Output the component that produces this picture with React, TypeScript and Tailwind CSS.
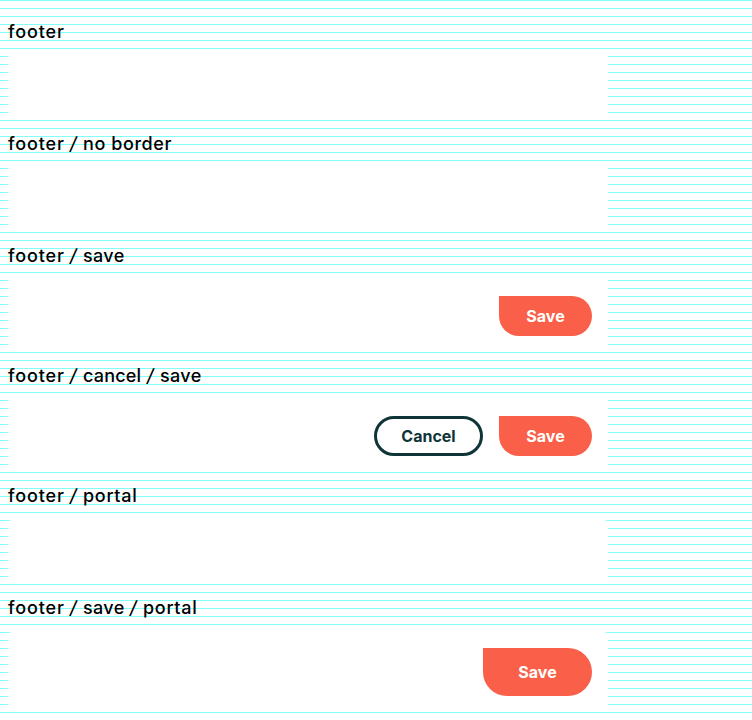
import type { ReactNode } from "react";

const wordStyles: Record<string, string> = {
  footer: "w-14 tracking-[0.86px]",
  "no border": "w-[89px] tracking-[0.58px]",
  save: "w-[41px] tracking-[0.36px]",
  cancel: "w-[58px] tracking-[0.2px]",
  portal: "w-[54px] tracking-[0.7px]",
};

function Title({ words }: { words: string[] }) {
  return (
    <h2 className="flex h-12 items-center gap-[5px] whitespace-nowrap text-[18px] font-medium leading-6 text-black">
      {words.map((word, i) => (
        <span key={word} className="flex gap-[5px]">
          {i > 0 && (
            <span className="w-[9px] -skew-x-[10deg] text-center">/</span>
          )}
          <span className={wordStyles[word]}>{word}</span>
        </span>
      ))}
    </h2>
  );
}

function Footer({ height, rounded, children }: { height: string; rounded?: boolean; children?: ReactNode }) {
  return (
    <footer
      className={`flex w-[600px] items-center justify-end gap-4 bg-white px-4 ${height} ${rounded ? "rounded-t-[4px]" : ""}`}
    >
      {children}
    </footer>
  );
}

function SaveButton({ large }: { large?: boolean }) {
  return (
    <button
      className={`bg-[#fa5f4a] text-[16px] font-bold leading-6 text-white ${
        large ? "h-12 w-[109px] rounded-[24px] rounded-tl-none" : "h-10 w-[93px] rounded-[20px] rounded-tl-none"
      }`}
    >
      Save
    </button>
  );
}

function CancelButton() {
  return (
    <button className="h-10 w-[109px] rounded-[20px] border-[3px] border-[#103538] bg-white text-[16px] font-bold leading-6 text-[#103538]">
      Cancel
    </button>
  );
}

export default function App() {
  return (
    <main className="h-[720px] w-full overflow-hidden bg-white bg-[linear-gradient(to_bottom,#80ffff_1px,transparent_1px)] bg-[length:100%_8px] px-2 pt-2 font-['Inter',sans-serif]">
      <Title words={["footer"]} />
      <Footer height="h-16" />
      <Title words={["footer", "no border"]} />
      <Footer height="h-16" />
      <Title words={["footer", "save"]} />
      <Footer height="h-[72px]">
        <SaveButton />
      </Footer>
      <Title words={["footer", "cancel", "save"]} />
      <Footer height="h-[72px]">
        <CancelButton />
        <SaveButton />
      </Footer>
      <Title words={["footer", "portal"]} />
      <Footer height="h-16" rounded />
      <Title words={["footer", "save", "portal"]} />
      <Footer height="h-20" rounded>
        <SaveButton large />
      </Footer>
    </main>
  );
}
